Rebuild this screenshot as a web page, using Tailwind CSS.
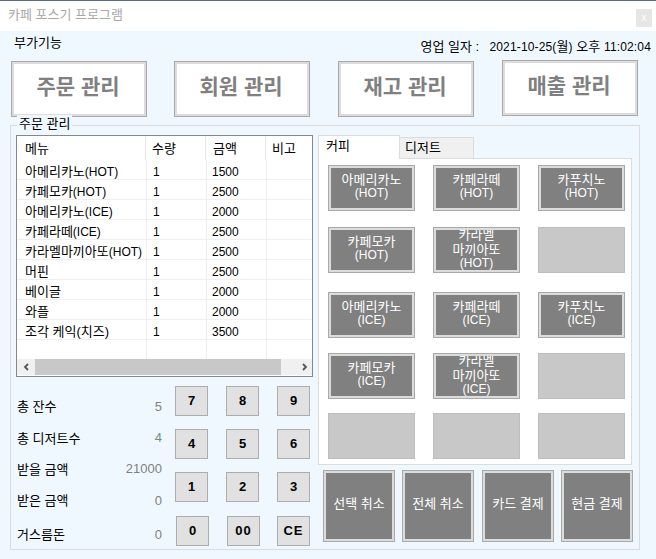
<!DOCTYPE html>
<html lang="ko">
<head>
<meta charset="utf-8">
<script src="https://cdn.jsdelivr.net/npm/@tailwindcss/browser@4"></script>
</head>
<body class="m-0">
<div class="relative w-[656px] h-[559px] overflow-hidden bg-[#f0f8ff] text-black text-[12px] font-['Liberation_Sans','Noto_Sans_CJK_KR',sans-serif]">
  <!-- title bar -->
  <div class="h-[31px] bg-white border-t border-[#5a6b80] flex items-center justify-between pl-[8px] pr-[4px]">
    <span class="text-[13px] text-[#a8a8a8] -mt-[2px]">카페 포스기 프로그램</span>
    <span class="w-[16px] h-[18px] mt-[3px] bg-[#e6e6e6] text-white text-[10px] leading-[18px] text-center">x</span>
  </div>
  <!-- info row -->
  <div class="h-[30px] flex justify-between pl-[14px] pr-[5px]">
    <span class="text-[13px] leading-[20px] mt-[2px]">부가기능</span>
    <div class="flex mt-[6px] leading-[20px] text-[12px]">
      <span class="text-[13px] w-[69px]">영업 일자 :</span>
      <span class="tracking-[0.15px]">2021-10-25(<span class="text-[13px]">월</span>) <span class="text-[13px]">오후</span> 11:02:04</span>
    </div>
  </div>
  <!-- main buttons -->
  <div class="flex pl-[11px]">
    <button class="w-[136px] h-[56px] pb-[4px] pr-[2px] bg-white border border-[#a9a9a9] outline-[2px] outline-[#dcdcdc] -outline-offset-[3px] font-bold text-[21px] text-[#808080]">주문 관리</button>
    <button class="ml-[27px] w-[136px] h-[56px] pb-[4px] pr-[2px] bg-white border border-[#a9a9a9] outline-[2px] outline-[#dcdcdc] -outline-offset-[3px] font-bold text-[21px] text-[#808080]">회원 관리</button>
    <button class="ml-[28px] w-[136px] h-[56px] pb-[4px] pr-[2px] bg-white border border-[#a9a9a9] outline-[2px] outline-[#dcdcdc] -outline-offset-[3px] font-bold text-[21px] text-[#808080]">재고 관리</button>
    <button class="ml-[28px] -mt-[1px] w-[136px] h-[56px] pb-[4px] pr-[2px] bg-white border border-[#a9a9a9] outline-[2px] outline-[#dcdcdc] -outline-offset-[3px] font-bold text-[21px] text-[#808080]">매출 관리</button>
  </div>
  <!-- group box -->
  <div class="relative mt-[8px] ml-[10px] w-[630px] h-[425px] border border-[#dcdcdc] flex">
    <span class="absolute left-[6px] -top-[11px] px-[2px] bg-[#f0f8ff] text-[13px] leading-[17px]">주문 관리</span>
    <!-- left column -->
    <div class="w-[307px] pl-[5px] pt-[9px]">
      <!-- list -->
      <div class="w-[297px] h-[242px] bg-white border border-[#828790] flex flex-col">
        <div class="h-[24px] flex shrink-0 text-[13px] leading-[26px]">
          <span class="w-[129px] pl-[8px] border-r border-[#e8e8e8]">메뉴</span>
          <span class="w-[60px] pl-[6px] border-r border-[#e8e8e8]">수량</span>
          <span class="w-[60px] pl-[7px] border-r border-[#e8e8e8]">금액</span>
          <span class="pl-[6px]">비고</span>
        </div>
        <div class="flex-1 divide-y divide-[#efefef] overflow-hidden">
          <div class="h-[20px] flex leading-[24px]"><span class="w-[129px] pl-[8px]"><span class="text-[13px]">아메리카노</span>(HOT)</span><span class="w-[60px] pl-[6px] border-l border-[#efefef]">1</span><span class="w-[60px] pl-[5px] border-l border-[#efefef]">1500</span><span class="flex-1 border-l border-[#efefef]"></span></div>
          <div class="h-[20px] flex leading-[24px]"><span class="w-[129px] pl-[8px]"><span class="text-[13px]">카페모카</span>(HOT)</span><span class="w-[60px] pl-[6px] border-l border-[#efefef]">1</span><span class="w-[60px] pl-[5px] border-l border-[#efefef]">2500</span><span class="flex-1 border-l border-[#efefef]"></span></div>
          <div class="h-[20px] flex leading-[24px]"><span class="w-[129px] pl-[8px]"><span class="text-[13px]">아메리카노</span>(ICE)</span><span class="w-[60px] pl-[6px] border-l border-[#efefef]">1</span><span class="w-[60px] pl-[5px] border-l border-[#efefef]">2000</span><span class="flex-1 border-l border-[#efefef]"></span></div>
          <div class="h-[20px] flex leading-[24px]"><span class="w-[129px] pl-[8px]"><span class="text-[13px]">카페라떼</span>(ICE)</span><span class="w-[60px] pl-[6px] border-l border-[#efefef]">1</span><span class="w-[60px] pl-[5px] border-l border-[#efefef]">2500</span><span class="flex-1 border-l border-[#efefef]"></span></div>
          <div class="h-[20px] flex leading-[24px]"><span class="w-[129px] pl-[8px] whitespace-nowrap"><span class="text-[13px]">카라멜마끼아또</span>(HOT)</span><span class="w-[60px] pl-[6px] border-l border-[#efefef]">1</span><span class="w-[60px] pl-[5px] border-l border-[#efefef]">2500</span><span class="flex-1 border-l border-[#efefef]"></span></div>
          <div class="h-[20px] flex leading-[24px]"><span class="w-[129px] pl-[8px] text-[13px]">머핀</span><span class="w-[60px] pl-[6px] border-l border-[#efefef]">1</span><span class="w-[60px] pl-[5px] border-l border-[#efefef]">2500</span><span class="flex-1 border-l border-[#efefef]"></span></div>
          <div class="h-[20px] flex leading-[24px]"><span class="w-[129px] pl-[8px] text-[13px]">베이글</span><span class="w-[60px] pl-[6px] border-l border-[#efefef]">1</span><span class="w-[60px] pl-[5px] border-l border-[#efefef]">2000</span><span class="flex-1 border-l border-[#efefef]"></span></div>
          <div class="h-[20px] flex leading-[24px]"><span class="w-[129px] pl-[8px] text-[13px]">와플</span><span class="w-[60px] pl-[6px] border-l border-[#efefef]">1</span><span class="w-[60px] pl-[5px] border-l border-[#efefef]">2000</span><span class="flex-1 border-l border-[#efefef]"></span></div>
          <div class="h-[20px] flex leading-[24px]"><span class="w-[129px] pl-[8px] text-[13px]">조각 케익(치즈)</span><span class="w-[60px] pl-[6px] border-l border-[#efefef]">1</span><span class="w-[60px] pl-[5px] border-l border-[#efefef]">3500</span><span class="flex-1 border-l border-[#efefef]"></span></div>
          <div class="h-[20px] flex leading-[24px]"><span class="w-[129px]"></span><span class="w-[60px] border-l border-[#efefef]"></span><span class="w-[60px] border-l border-[#efefef]"></span><span class="flex-1 border-l border-[#efefef]"></span></div>
        </div>
        <!-- scrollbar -->
        <div class="h-[16px] mb-[1px] bg-[#f0f0f0] flex items-center shrink-0">
          <div class="w-[18px] flex justify-center"><svg width="7" height="8" viewBox="0 0 7 8"><path d="M5 1 2 4l3 3" fill="none" stroke="#555" stroke-width="1.8"/></svg></div>
          <div class="w-[246px] h-[16px] bg-[#c8c8c8]"></div>
          <div class="flex-1 flex justify-end pr-[4px]"><svg width="7" height="8" viewBox="0 0 7 8"><path d="M2 1l3 3-3 3" fill="none" stroke="#555" stroke-width="1.8"/></svg></div>
        </div>
      </div>
      <!-- stats + numpad -->
      <div class="flex w-[297px] mt-[9px] pl-[1px]">
        <div class="w-[146px] pt-[11px] pr-[1px] text-[13px]">
          <div class="h-[31px] flex justify-between"><span>총 잔수</span><span class="text-[#808080]">5</span></div>
          <div class="h-[31px] flex justify-between"><span class="mt-[1px]">총 디저트수</span><span class="text-[#6f8f80]">4</span></div>
          <div class="h-[31px] flex justify-between"><span class="mt-[1px]">받을 금액</span><span class="text-[#808080]">21000</span></div>
          <div class="h-[34px] flex justify-between"><span class="mt-[1px]">받은 금액</span><span class="text-[#808080] mt-[1px]">0</span></div>
          <div class="h-[20px] flex justify-between"><span class="mt-[1px]">거스름돈</span><span class="text-[#808080] mt-[1px]">0</span></div>
        </div>
        <div class="ml-[12px] w-[135px] font-bold text-[13px]">
          <div class="flex gap-[18px]">
            <button class="w-[33px] h-[30px] bg-[#e1e1e1] border border-[#adadad]">7</button>
            <button class="w-[33px] h-[30px] bg-[#e1e1e1] border border-[#adadad]">8</button>
            <button class="w-[33px] h-[30px] bg-[#e1e1e1] border border-[#adadad]">9</button>
          </div>
          <div class="flex gap-[18px] mt-[13px]">
            <button class="w-[33px] h-[30px] bg-[#e1e1e1] border border-[#adadad]">4</button>
            <button class="w-[33px] h-[30px] bg-[#e1e1e1] border border-[#adadad]">5</button>
            <button class="w-[33px] h-[30px] bg-[#e1e1e1] border border-[#adadad]">6</button>
          </div>
          <div class="flex gap-[18px] mt-[13px]">
            <button class="w-[33px] h-[30px] bg-[#e1e1e1] border border-[#adadad]">1</button>
            <button class="w-[33px] h-[30px] bg-[#e1e1e1] border border-[#adadad]">2</button>
            <button class="w-[33px] h-[30px] bg-[#e1e1e1] border border-[#adadad]">3</button>
          </div>
          <div class="flex mt-[14px]">
            <button class="ml-[1px] w-[33px] h-[30px] bg-[#e1e1e1] border border-[#adadad]">0</button>
            <button class="ml-[18px] w-[33px] h-[30px] bg-[#e1e1e1] border border-[#adadad] tracking-[1px]">00</button>
            <button class="ml-[17px] w-[33px] h-[30px] bg-[#e1e1e1] border border-[#adadad] tracking-[1px]">CE</button>
          </div>
        </div>
      </div>
    </div>
    <!-- right column -->
    <div class="pt-[9px] flex-1">
      <div class="flex items-end h-[23px]">
        <span class="w-[82px] h-[24px] -mb-[1px] z-10 bg-white border border-b-0 border-[#dcdcdc] pl-[7px] text-[13px] leading-[20px]">커피</span>
        <span class="w-[74px] h-[21px] bg-[#f0f0f0] border border-b-0 border-l-0 border-[#dcdcdc] pl-[5px] text-[13px] leading-[19px]">디저트</span>
      </div>
      <div class="w-[314px] h-[307px] bg-white border border-[#dcdcdc] pl-[9px] pt-[6px] text-white text-[12px] leading-[13px]">
        <div class="flex gap-[18px]">
          <button class="w-[87px] h-[46px] pb-[4px] bg-[#808080] border border-[#a9a9a9] outline-[2px] outline-[#dcdcdc] -outline-offset-[3px] overflow-hidden"><span class="text-[13px]">아메리카노</span><br>(HOT)</button>
          <button class="w-[87px] h-[46px] pb-[4px] bg-[#808080] border border-[#a9a9a9] outline-[2px] outline-[#dcdcdc] -outline-offset-[3px] overflow-hidden"><span class="text-[13px]">카페라떼</span><br>(HOT)</button>
          <button class="w-[87px] h-[46px] pb-[4px] bg-[#808080] border border-[#a9a9a9] outline-[2px] outline-[#dcdcdc] -outline-offset-[3px] overflow-hidden"><span class="text-[13px]">카푸치노</span><br>(HOT)</button>
        </div>
        <div class="flex gap-[18px] mt-[16px]">
          <button class="w-[87px] h-[46px] pb-[4px] bg-[#808080] border border-[#a9a9a9] outline-[2px] outline-[#dcdcdc] -outline-offset-[3px] overflow-hidden"><span class="text-[13px]">카페모카</span><br>(HOT)</button>
          <button class="w-[87px] h-[46px] pb-[4px] leading-[13.5px] bg-[#808080] border border-[#a9a9a9] outline-[2px] outline-[#dcdcdc] -outline-offset-[3px] overflow-hidden"><span class="text-[13px]">카라멜<br>마끼아또</span><br>(HOT)</button>
          <div class="w-[87px] h-[46px] bg-[#c8c8c8] border border-[#bdbdbd]"></div>
        </div>
        <div class="flex gap-[18px] mt-[19px]">
          <button class="w-[87px] h-[46px] pb-[4px] bg-[#808080] border border-[#a9a9a9] outline-[2px] outline-[#dcdcdc] -outline-offset-[3px] overflow-hidden"><span class="text-[13px]">아메리카노</span><br>(ICE)</button>
          <button class="w-[87px] h-[46px] pb-[4px] bg-[#808080] border border-[#a9a9a9] outline-[2px] outline-[#dcdcdc] -outline-offset-[3px] overflow-hidden"><span class="text-[13px]">카페라떼</span><br>(ICE)</button>
          <button class="w-[87px] h-[46px] pb-[4px] bg-[#808080] border border-[#a9a9a9] outline-[2px] outline-[#dcdcdc] -outline-offset-[3px] overflow-hidden"><span class="text-[13px]">카푸치노</span><br>(ICE)</button>
        </div>
        <div class="flex gap-[18px] mt-[15px]">
          <button class="w-[87px] h-[46px] pb-[4px] bg-[#808080] border border-[#a9a9a9] outline-[2px] outline-[#dcdcdc] -outline-offset-[3px] overflow-hidden"><span class="text-[13px]">카페모카</span><br>(ICE)</button>
          <button class="w-[87px] h-[46px] pb-[4px] leading-[13.5px] bg-[#808080] border border-[#a9a9a9] outline-[2px] outline-[#dcdcdc] -outline-offset-[3px] overflow-hidden"><span class="text-[13px]">카라멜<br>마끼아또</span><br>(ICE)</button>
          <div class="w-[87px] h-[46px] bg-[#c8c8c8] border border-[#bdbdbd]"></div>
        </div>
        <div class="flex gap-[18px] mt-[14px]">
          <div class="w-[87px] h-[46px] bg-[#c8c8c8] border border-[#bdbdbd]"></div>
          <div class="w-[87px] h-[46px] bg-[#c8c8c8] border border-[#bdbdbd]"></div>
          <div class="w-[87px] h-[46px] bg-[#c8c8c8] border border-[#bdbdbd]"></div>
        </div>
      </div>
      <div class="flex mt-[5px] ml-[5px] text-white text-[13px]">
        <button class="w-[72px] h-[72px] pb-[4px] bg-[#808080] border border-[#a9a9a9] outline-[2px] outline-[#dcdcdc] -outline-offset-[3px]">선택 취소</button>
        <button class="ml-[7px] w-[72px] h-[72px] pb-[4px] bg-[#808080] border border-[#a9a9a9] outline-[2px] outline-[#dcdcdc] -outline-offset-[3px]">전체 취소</button>
        <button class="ml-[8px] w-[72px] h-[72px] pb-[4px] bg-[#808080] border border-[#a9a9a9] outline-[2px] outline-[#dcdcdc] -outline-offset-[3px]">카드 결제</button>
        <button class="ml-[7px] w-[72px] h-[72px] pb-[4px] bg-[#808080] border border-[#a9a9a9] outline-[2px] outline-[#dcdcdc] -outline-offset-[3px]">현금 결제</button>
      </div>
    </div>
  </div>
</div>
</body>
</html>
